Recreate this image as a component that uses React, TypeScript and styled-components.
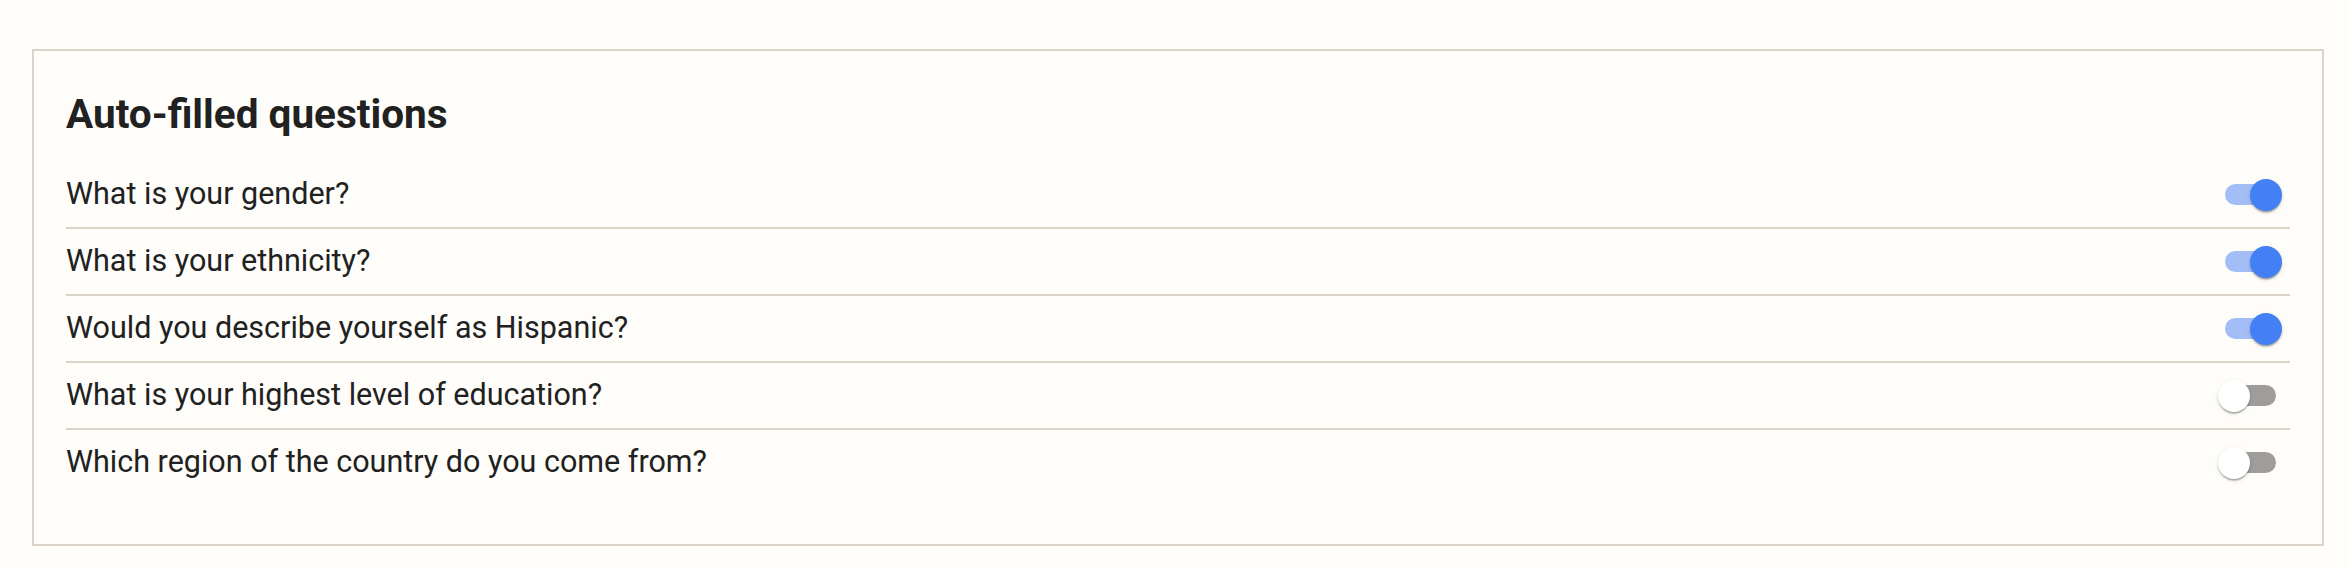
import React from "react";
import styled, { createGlobalStyle } from "styled-components";

const GlobalStyle = createGlobalStyle`
  html, body {
    margin: 0;
    padding: 0;
    background: #fefdf9;
  }
  body {
    font-family: Roboto, "Liberation Sans", Arial, sans-serif;
    color: #212121;
  }
`;

const Page = styled.div`
  padding: 49px 26px 24px 32px;
`;

const Card = styled.section`
  border: 2px solid #d9d3ca;
  padding: 40px 32px 47px;
  background: #fefdf9;
`;

const Heading = styled.h2`
  margin: 0 0 24px;
  font-size: 40.5px;
  line-height: 47px;
  font-weight: 700;
  color: #212121;
`;

const List = styled.div`
  display: flex;
  flex-direction: column;
`;

const Row = styled.div<{ $last?: boolean }>`
  display: flex;
  align-items: center;
  justify-content: space-between;
  height: 65px;
  border-bottom: ${(p) => (p.$last ? "2px solid transparent" : "2px solid #d9d3ca")};
`;

const Label = styled.span`
  font-size: 30.5px;
  line-height: 36px;
  color: #212121;
  margin-bottom: 2px;
`;

const SwitchWrap = styled.div`
  display: flex;
  align-items: center;
  padding: 0 14px 0 0;
`;

const Track = styled.div<{ $on: boolean }>`
  width: 51px;
  height: 21px;
  border-radius: 11px;
  background: ${(p) => (p.$on ? "#a3bdf7" : "#9e9d9b")};
  display: flex;
  align-items: center;
  justify-content: ${(p) => (p.$on ? "flex-end" : "flex-start")};
`;

const Thumb = styled.div<{ $on: boolean }>`
  flex: none;
  width: 32px;
  height: 32px;
  border-radius: 50%;
  margin: ${(p) => (p.$on ? "0 -6px 0 0" : "0 0 0 -7px")};
  background: ${(p) => (p.$on ? "#4480f5" : "#ffffff")};
  box-shadow: 0px 3px 1.5px -1.5px rgba(0, 0, 0, 0.2),
    0px 1.5px 1.5px 0px rgba(0, 0, 0, 0.14),
    0px 1.5px 4.5px 0px rgba(0, 0, 0, 0.12);
`;

const Toggle: React.FC<{ on: boolean }> = ({ on }) => (
  <SwitchWrap role="switch" aria-checked={on}>
    <Track $on={on}>
      <Thumb $on={on} />
    </Track>
  </SwitchWrap>
);

const questions: { text: string; on: boolean }[] = [
  { text: "What is your gender?", on: true },
  { text: "What is your ethnicity?", on: true },
  { text: "Would you describe yourself as Hispanic?", on: true },
  { text: "What is your highest level of education?", on: false },
  { text: "Which region of the country do you come from?", on: false },
];

export default function App() {
  return (
    <>
      <GlobalStyle />
      <Page>
        <Card>
          <Heading>Auto-filled questions</Heading>
          <List>
            {questions.map((q, i) => (
              <Row key={q.text} $last={i === questions.length - 1}>
                <Label>{q.text}</Label>
                <Toggle on={q.on} />
              </Row>
            ))}
          </List>
        </Card>
      </Page>
    </>
  );
}
